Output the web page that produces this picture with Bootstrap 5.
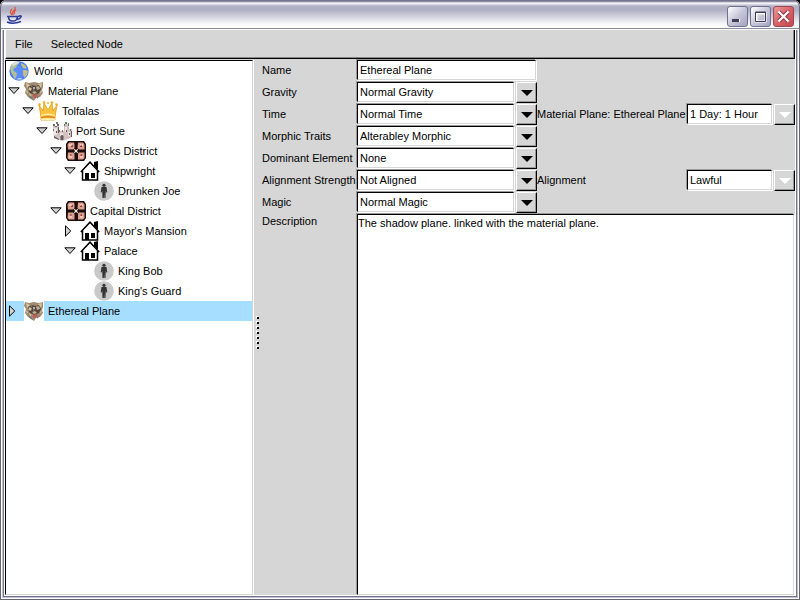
<!DOCTYPE html>
<html lang="en">
<head>
<meta charset="utf-8">
<meta name="viewport" content="width=device-width, initial-scale=1">
<title>World Builder</title>
<link href="https://cdn.jsdelivr.net/npm/bootstrap@5.3.0/dist/css/bootstrap.min.css" rel="stylesheet">
<style>
  body { font: 11px/14px "Liberation Sans", Arial, sans-serif; color: #000; background: #000; }
  .window-frame { background: #d6d6d6; border-radius: 7px 7px 0 0; padding: 0 5px 5px; overflow: hidden;
    box-shadow: inset 0 0 0 1px #666677, inset 0 0 0 2px #fff, inset 0 0 0 3px #c0c0d0, inset 0 0 0 4px #73738c, inset 0 0 0 5px #fff; }
  .title-strip { height: 30px; margin: 0 -5px; padding: 6px 6px 0; flex: none; border-radius: 7px 7px 0 0;
    background: linear-gradient(#73738c 0, #73738c 1px, #a9a9bd 2px, #fff 3px, #e4e4ee 4px, #b2b2c6 6px, #b0b0c5 10px, #f8f8fc 24px, #fff 28px, #8c8c9f 28px, #8c8c9f 29px, #fff 29px);
    box-shadow: inset 1px 0 #666677, inset -1px 0 #666677; }
  .win-controls { gap: 2px; }
  .win-btn { width: 21px; height: 21px; padding: 0; border: 1px solid #70708f; border-radius: 3px; background: linear-gradient(135deg, #fff, #c6c6da 50%, #a3a3c0); line-height: 0; }
  .win-close { background: linear-gradient(135deg, #e99a9a, #d66366 50%, #c24b50); border-color: #a04454; }
  .menu-strip { height: 29px; flex: none; border-left: 1px solid #fff; border-right: 1px solid #000; border-bottom: 1px solid #000; box-shadow: inset -1px -1px #888; }
  .menu-strip button { border: 0; background: none; padding: 0 9px; }
  .work-area { padding-top: 1px; }
  .sunken { background: #fff; border: 1px solid #000; border-right-color: #d6d6d6; border-bottom-color: #d6d6d6; border-radius: 0; box-shadow: -1px -1px #999, 1px 1px #fff; }
  .tree-pane { width: 248px; box-shadow: 1px 0 #fff; }
  .tree-pane ul { list-style: none; margin: 0; padding: 0; }
  .tree-row { height: 20px; padding-left: calc(14px * var(--depth, 0)); }
  .twist { width: 18px; height: 20px; padding: 0 0 0 2px; border: 0; background: none; line-height: 0; text-align: left; flex: none; }
  .pic { width: 20px; height: 20px; margin-right: 4px; flex: none; }
  .root-row { padding-left: 3px; }
  .root-row .pic { margin-right: 5px; }
  .chosen { background: #a6deff; }
  .chosen .pic { background: #fff; }
  .d1 { --depth: 1; } .d2 { --depth: 2; } .d3 { --depth: 3; } .d4 { --depth: 4; } .d5 { --depth: 5; }
  .split-bar { width: 9px; padding: 10px 0 0 3px; flex: none; }
  .form-area { display: grid; grid-template-columns: 95px 180px 150px 1fr; grid-template-rows: repeat(7, 22px) 1fr; }
  .form-area label { line-height: 20px; white-space: nowrap; }
  .field { height: 20px; padding: 0 2px; font: inherit; color: #000; min-width: 0; opacity: 1; }
  .name-field { width: 179px; }
  select.field { appearance: none; }
  .drop { width: 21px; height: 21px; margin-left: 2px; padding: 0; border: 1px solid #000; border-top-color: #fff; border-left-color: #fff; box-shadow: inset -1px -1px #999; background: #d6d6d6; line-height: 0; flex: none; }
  .form-area .notes-label { line-height: 14px; }
  .notes { grid-column: 2 / -1; resize: none; padding: 1px 0; margin-right: 1px; font: inherit; color: #000; }
</style>
<script src="https://cdn.jsdelivr.net/npm/bootstrap@5.3.0/dist/js/bootstrap.bundle.min.js"></script>
</head>
<body>
<svg class="d-none" aria-hidden="true">
  <symbol id="open" viewBox="0 0 12 8"><path d="M.8.8h10.4L6 6.500z" fill="#d2d2d2" stroke="#000"/></symbol>
  <symbol id="shut" viewBox="0 0 8 12"><path d="M1.500.8v10.400L6.800 6z" fill="#d2d2d2" stroke="#000"/></symbol>
  <symbol id="arrow" viewBox="0 0 12 6"><path d="M0 0h12L6 6z" fill="currentColor"/></symbol>
  <symbol id="globe" viewBox="0 0 20 20">
    <circle cx="10" cy="10" r="9.700" fill="#4a7df0"/><circle cx="9" cy="11" r="6.500" fill="#5a8cff"/>
    <path d="M1 7Q3 1 9 .5l1 2-2 2-1 2-2 1-1 2 2 1 2 2-1 4-1 2-2-4-2-3z" fill="#b4bf95"/>
    <path d="M12 2q4 1 5.500 4L17 8l-3-1-2-3zM14 9l3 0 2 1-1 4-3 3-1-4z" fill="#c3c08c"/>
    <path d="M3 4Q6 0 11 1L8 3 4 5zM7 18q4 1 7 0l-3-1z" fill="#dfe4da"/>
  </symbol>
  <symbol id="plane" viewBox="0 0 20 20">
    <path d="M1 1l4 1 5-1 5 1 4-1v5l-1 3 1 3-3 4-4 1-2 3-3-2-3-2-3-4 1-4-2-3z" fill="#a08b70"/>
    <path d="M2 2l4 2-3 3zM18 2l-4 1 3 4zM5 12l3 2-2 1zM2 9l2 2-1 2zM18 9l-2 2 1 2z" fill="#d8c6a0"/>
    <path d="M4 6l4-2 3 1 4-1 2 4-2 4-4 2-5-2-2-3z" fill="#51453f"/>
    <path d="M5 6l3 1-1 3-3-1zM12 6l3-1 1 3-3 1zM8 11l3-1 2 2-3 1z" fill="#c4ad86"/>
    <path d="M7 4l2 1-2 1zM12 4l2 1-2 1zM9 8l2 1-2 1z" fill="#8d7f78"/>
    <circle cx="10" cy="7" r="1" fill="#cfd0d8"/><circle cx="6" cy="8" r=".8" fill="#e9dcc5"/>
    <path d="M9 14l3-1 2 2-3 2-2-1z" fill="#c4575a"/><path d="M4 14l4 2 1 3-3-2zM13 16l3-2-3 4z" fill="#77797b"/>
  </symbol>
  <symbol id="crown" viewBox="0 0 20 20">
    <path d="M1 4l4 6 1-8 4 7 4-7 1 8 4-6-2 12v3H3v-3z" fill="#f9c43b" stroke="#e39a1f" stroke-width=".8"/>
    <path d="M3 14q7-3 14 0v1q-7-2-14 0zM3 17.500q7-1 14 0v1.500H3z" fill="#fff0b0"/>
    <path d="M3 16q7-2 14 0v1q-7-1-14 0z" fill="#e1831a"/>
    <g fill="#f5ae28"><circle cx="1.500" cy="3.500" r="1.300"/><circle cx="6" cy="1.600" r="1.300"/><circle cx="10" cy="2" r="1"/><circle cx="14" cy="1.600" r="1.300"/><circle cx="18.500" cy="3.500" r="1.300"/></g>
  </symbol>
  <symbol id="castle" viewBox="0 0 20 20">
    <path d="M1 5h6v5h5V3h5v5h3v8l-4 2-6 2-8-4z" fill="#d3c2c2"/>
    <path d="M2 7h3v7H2zM13 6h2v5h-2zM8 12h3v3H8zM16 11h2v4h-2z" fill="#f0e4e2"/>
    <path d="M1 3h2v2H1zM5 3h2v2H5zM3 5h2v1H3zM1 8h1v2H1zM7 9h1v2H7zM10 9h1v2h-1zM12 3h1v2h-1zM16 3h1v2h-1zM18 8h1v2h-1z" fill="#75696c"/>
    <path d="M8.500 15q1.500-2 3 0v4h-3zM4 10h1v2H4zM14 9h1v2h-1zM17 12h1v2h-1zM2 15l5 3v1l-5-2zM6 6h1v6H6zM19 10h1v6h-1z" fill="#67595d"/>
    <path d="M13 1h2v2h-2zM16 2h1v2h-1z" fill="#4d8a55"/><path d="M4 1h2v2H4z" fill="#777"/>
  </symbol>
  <symbol id="district" viewBox="0 0 20 20">
    <path d="M2 0h16l2 3v14l-2 3H2l-2-3V3z" fill="#1d0e0d"/>
    <path d="M3 1.500h5l.5 2V7L7 8.500H2l-.5-5zM12 1.500h5l1.500 2v5h-5L11.500 7zM2 11.500h5L8.500 13v5.500H3L1.500 17zM13 11.500h5.500V17L17 18.500h-5V13z" fill="#dba090"/>
    <path d="M3 3h3v2H3zM14 3h3v2h-3zM3 15h3v2H3zM14 15h3v2h-3z" fill="#f3c5b5"/>
    <path d="M5 5l2-1v2H5zM14 5l2-1v2h-2zM4 13l2 1-1 1-1-1zM14 14l2-1v2h-1z" fill="#8e3f3b"/>
    <path d="M7 7l3 2 3-2-2 3 2 3-3-2-3 2 2-3z" fill="#f4e8d0"/>
  </symbol>
  <symbol id="house" viewBox="0 0 20 20">
    <path d="M14 1l4-1v9l-4-4z" fill="#000"/>
    <path d="M3 10l7-8 7 8v9H3z" fill="#fff"/>
    <path d="M.8 11L10 1.200 19.200 11M2.500 9.500V19h15V9.500" fill="none" stroke="#000" stroke-width="1.500"/>
    <path d="M5 12h4v7H5zM11 12h4v5h-4z" fill="#000"/>
  </symbol>
  <symbol id="person" viewBox="0 0 20 20">
    <circle cx="10" cy="10" r="9.800" fill="#c9c9c9"/>
    <circle cx="10" cy="4.300" r="1.600" fill="#333"/>
    <path d="M7.500 6h5l.8 5.500h-1l-.5-2-.3 7.500h-1.200l-.2-5-.2 5H8.500l-.3-7.500-.5 2h-1z" fill="#333"/>
  </symbol>
</svg>

<main class="window-frame min-vh-100 d-flex flex-column">
  <header class="title-strip d-flex justify-content-between align-items-start">
    <svg width="17" height="18" viewBox="0 0 17 18" role="img" aria-label="Java">
      <path d="M8.500 1q2 2-1 4-2 2 0 4M6 3Q3 6 6 9M10 4q-3 2-1 4" fill="none" stroke="#e2523b" stroke-width="1.200"/>
      <path d="M1 10.500h11M2.500 10q0 5 3.500 5h2q3 0 3.500-5M12 10.500q4-1.500 3 .5-1 2-4 2.500M1 16q6 2.500 14-.5" fill="none" stroke="#2b3c99" stroke-width="1.500"/>
    </svg>
    <div class="win-controls d-flex">
      <button class="win-btn" type="button" aria-label="Minimize"><svg width="19" height="19"><path d="M4 12h8v3H4z" fill="#fff"/><path d="M4 12h7v3H4z" fill="#3e3e58"/></svg></button>
      <button class="win-btn" type="button" aria-label="Maximize"><svg width="19" height="19"><path d="M5.500 6.500h9v8h-9z" fill="none" stroke="#fff" stroke-width="2"/><path d="M4.500 5h10v9.500h-10zM4 5.500h11" fill="none" stroke="#3e3e58"/></svg></button>
      <button class="win-btn win-close" type="button" aria-label="Close"><svg width="19" height="19"><path d="M5 5l9 9M14 5l-9 9" stroke="#8d2b38" stroke-width="4"/><path d="M4.500 4.500l10 10M14.500 4.500l-10 10" stroke="#fff" stroke-width="2.400"/></svg></button>
    </div>
  </header>

  <nav class="menu-strip d-flex align-items-center" aria-label="Main menu">
    <button type="button">File</button>
    <button type="button">Selected Node</button>
  </nav>

  <div class="work-area d-flex flex-grow-1">
    <section class="tree-pane sunken flex-shrink-0" aria-label="Places">
      <ul>
        <li class="tree-row root-row d-flex align-items-center"><svg class="pic"><use href="#globe"/></svg>World</li>
        <li class="tree-row d-flex align-items-center"><button class="twist" type="button" aria-label="Collapse"><svg width="12" height="8"><use href="#open"/></svg></button><svg class="pic"><use href="#plane"/></svg>Material Plane</li>
        <li class="tree-row d1 d-flex align-items-center"><button class="twist" type="button" aria-label="Collapse"><svg width="12" height="8"><use href="#open"/></svg></button><svg class="pic"><use href="#crown"/></svg>Tolfalas</li>
        <li class="tree-row d2 d-flex align-items-center"><button class="twist" type="button" aria-label="Collapse"><svg width="12" height="8"><use href="#open"/></svg></button><svg class="pic"><use href="#castle"/></svg>Port Sune</li>
        <li class="tree-row d3 d-flex align-items-center"><button class="twist" type="button" aria-label="Collapse"><svg width="12" height="8"><use href="#open"/></svg></button><svg class="pic"><use href="#district"/></svg>Docks District</li>
        <li class="tree-row d4 d-flex align-items-center"><button class="twist" type="button" aria-label="Collapse"><svg width="12" height="8"><use href="#open"/></svg></button><svg class="pic"><use href="#house"/></svg>Shipwright</li>
        <li class="tree-row d5 d-flex align-items-center"><span class="twist"></span><svg class="pic"><use href="#person"/></svg>Drunken Joe</li>
        <li class="tree-row d3 d-flex align-items-center"><button class="twist" type="button" aria-label="Collapse"><svg width="12" height="8"><use href="#open"/></svg></button><svg class="pic"><use href="#district"/></svg>Capital District</li>
        <li class="tree-row d4 d-flex align-items-center"><button class="twist" type="button" aria-label="Expand"><svg width="8" height="12"><use href="#shut"/></svg></button><svg class="pic"><use href="#house"/></svg>Mayor's Mansion</li>
        <li class="tree-row d4 d-flex align-items-center"><button class="twist" type="button" aria-label="Collapse"><svg width="12" height="8"><use href="#open"/></svg></button><svg class="pic"><use href="#house"/></svg>Palace</li>
        <li class="tree-row d5 d-flex align-items-center"><span class="twist"></span><svg class="pic"><use href="#person"/></svg>King Bob</li>
        <li class="tree-row d5 d-flex align-items-center"><span class="twist"></span><svg class="pic"><use href="#person"/></svg>King's Guard</li>
        <li class="tree-row chosen d-flex align-items-center"><button class="twist" type="button" aria-label="Expand"><svg width="8" height="12"><use href="#shut"/></svg></button><svg class="pic"><use href="#plane"/></svg>Ethereal Plane</li>
      </ul>
    </section>

    <div class="split-bar d-flex align-items-center" role="separator" aria-orientation="vertical">
      <svg width="4" height="34">
        <path d="M1 0v34" stroke="#fff" stroke-width="2" stroke-dasharray="2 3"/>
        <path d="M2 1v33" stroke="#000" stroke-width="2" stroke-dasharray="2 3"/>
      </svg>
    </div>

    <form class="form-area flex-grow-1">
      <label for="name">Name</label>
      <input class="field sunken name-field" id="name" type="text" value="Ethereal Plane">
      <span></span><span></span>

      <label for="gravity">Gravity</label>
      <div class="d-flex"><select class="field sunken flex-grow-1" id="gravity"><option>Normal Gravity</option></select><button class="drop" type="button" tabindex="-1" aria-label="Open gravity list"><svg width="12" height="6"><use href="#arrow"/></svg></button></div>
      <span></span><span></span>

      <label for="time">Time</label>
      <div class="d-flex"><select class="field sunken flex-grow-1" id="time"><option>Normal Time</option></select><button class="drop" type="button" tabindex="-1" aria-label="Open time list"><svg width="12" height="6"><use href="#arrow"/></svg></button></div>
      <label for="ratio">Material Plane: Ethereal Plane</label>
      <div class="d-flex"><select class="field sunken flex-grow-1" id="ratio" disabled><option>1 Day: 1 Hour</option></select><button class="drop text-white" type="button" disabled aria-label="Open time ratio list"><svg width="12" height="6"><use href="#arrow"/></svg></button></div>

      <label for="morphic">Morphic Traits</label>
      <div class="d-flex"><select class="field sunken flex-grow-1" id="morphic"><option>Alterabley Morphic</option></select><button class="drop" type="button" tabindex="-1" aria-label="Open morphic traits list"><svg width="12" height="6"><use href="#arrow"/></svg></button></div>
      <span></span><span></span>

      <label for="element">Dominant Element</label>
      <div class="d-flex"><select class="field sunken flex-grow-1" id="element"><option>None</option></select><button class="drop" type="button" tabindex="-1" aria-label="Open dominant element list"><svg width="12" height="6"><use href="#arrow"/></svg></button></div>
      <span></span><span></span>

      <label for="strength">Alignment Strength</label>
      <div class="d-flex"><select class="field sunken flex-grow-1" id="strength"><option>Not Aligned</option></select><button class="drop" type="button" tabindex="-1" aria-label="Open alignment strength list"><svg width="12" height="6"><use href="#arrow"/></svg></button></div>
      <label for="alignment">Alignment</label>
      <div class="d-flex"><select class="field sunken flex-grow-1" id="alignment" disabled><option>Lawful</option></select><button class="drop text-white" type="button" disabled aria-label="Open alignment list"><svg width="12" height="6"><use href="#arrow"/></svg></button></div>

      <label for="magic">Magic</label>
      <div class="d-flex"><select class="field sunken flex-grow-1" id="magic"><option>Normal Magic</option></select><button class="drop" type="button" tabindex="-1" aria-label="Open magic list"><svg width="12" height="6"><use href="#arrow"/></svg></button></div>
      <span></span><span></span>

      <label class="notes-label" for="description">Description</label>
      <textarea class="notes sunken" id="description">The shadow plane. linked with the material plane.</textarea>
    </form>
  </div>
</main>
</body>
</html>
